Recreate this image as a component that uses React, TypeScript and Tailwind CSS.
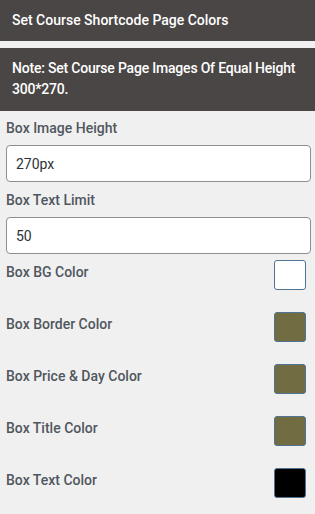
import React from 'react';

const colorRows = [
    { label: 'Box BG Color', color: '#ffffff' },
    { label: 'Box Border Color', color: '#726c42' },
    { label: 'Box Price & Day Color', color: '#726c42' },
    { label: 'Box Title Color', color: '#726c42' },
    { label: 'Box Text Color', color: '#000000' },
];

const App = () => {
    return (
        <div className="w-[315px] min-h-screen bg-[#f0f0f1] font-['Roboto',sans-serif]">
            <div className="h-[41px] bg-[#4a4645] px-3 flex items-center text-white text-[14px] font-medium">
                Set Course Shortcode Page Colors
            </div>
            <div className="mt-[7px] bg-[#4a4645] pl-3 pr-1 pt-[10px] pb-[11px] text-white text-[14px] leading-[21px] tracking-[-0.2px] font-medium">
                Note: Set Course Page Images Of Equal Height 300*270.
            </div>
            <div className="px-[6px]">
                <label className="block mt-[7px] mb-[7px] text-[14px] leading-[20px] font-medium text-[#50575e]">Box Image Height</label>
                <input
                    type="text"
                    defaultValue="270px"
                    className="block w-[305px] h-[37px] px-[9px] bg-white border border-[#8c8f94] rounded-[4px] text-[14px] text-[#2c3338] outline-none"
                />
                <label className="block mt-[8px] mb-[7px] text-[14px] leading-[20px] font-medium text-[#50575e]">Box Text Limit</label>
                <input
                    type="text"
                    defaultValue="50"
                    className="block w-[305px] h-[37px] px-[9px] bg-white border border-[#8c8f94] rounded-[4px] text-[14px] text-[#2c3338] outline-none"
                />
                <div className="pt-[6px]">
                    {colorRows.map((row) => (
                        <div key={row.label} className="h-[52px] flex items-start justify-between pr-[3px]">
                            <span className="leading-[24px] text-[14px] font-medium text-[#50575e]">{row.label}</span>
                            <span
                                className="block w-[32px] h-[30px] rounded-[3px] border border-[#4f7393]"
                                style={{ backgroundColor: row.color }}
                            />
                        </div>
                    ))}
                </div>
            </div>
        </div>
    );
};

export default App;
